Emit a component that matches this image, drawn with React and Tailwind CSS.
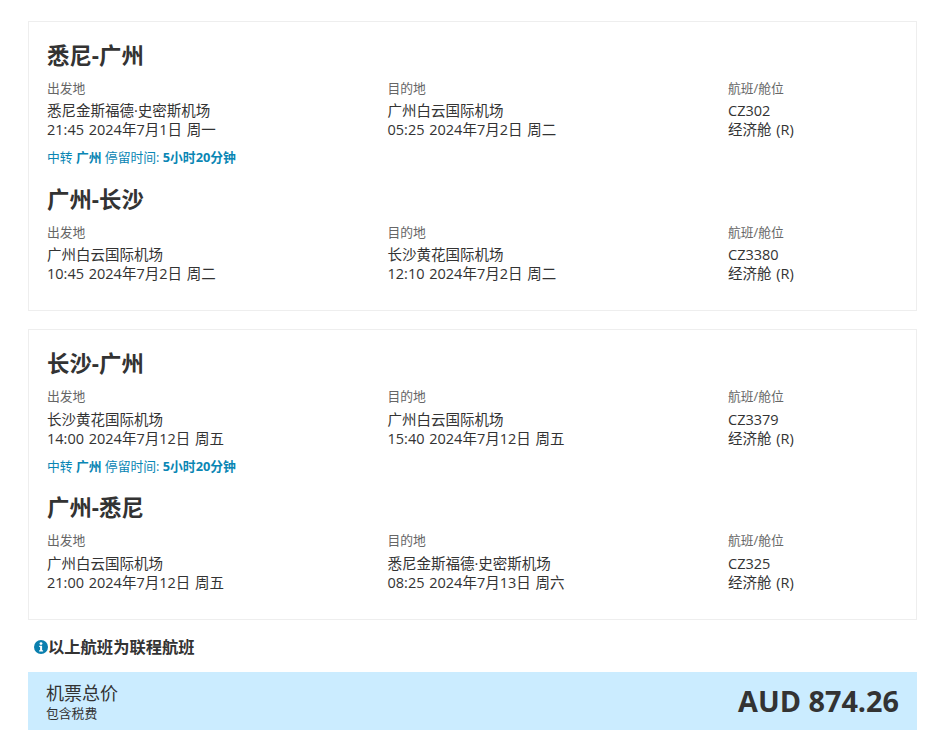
function Segment({ title, a, b, c }) {
  return (
    <div>
      <h2 className="text-[22.4px] leading-[30px] font-bold text-[#333333]">{title}</h2>
      <div className="mt-[8px] grid grid-cols-[340.5px_340.5px_1fr]">
        {[a, b, c].map((col, i) => (
          <div key={i}>
            <div className="text-[12.8px] leading-[19px] text-[#666666]">{col[0]}</div>
            <div className="mt-[3.4px] text-[14.5px] leading-[19px] text-[#333333]">{col[1]}</div>
            <div className="text-[14.5px] leading-[19px] text-[#333333] [word-spacing:1px]">{col[2]}</div>
          </div>
        ))}
      </div>
    </div>
  );
}
function Transfer() {
  return (
    <div className="mt-[9px] mb-[17.6px] text-[12.8px] leading-[19px] text-[#0a86b4]">
      中转 <span className="font-semibold">广州</span> 停留时间: <span className="font-bold">5小时20分钟</span>
    </div>
  );
}
function Card({ children, cls }) {
  return <div className={"border border-[#eeeeee] bg-white pl-[18px] pr-[18px] " + cls}>{children}</div>;
}
export default function App() {
  return (
    <div className="w-[936px] h-[737px] overflow-hidden bg-white pt-[21px] pl-[28px] pr-[19px]" style={{ fontFamily: '"Open Sans","Noto Sans CJK SC",sans-serif' }}>
      <Card cls="h-[290.2px] pt-[19px]">
        <Segment title="悉尼-广州"
          a={["出发地", "悉尼金斯福德·史密斯机场", "21:45 2024年7月1日 周一"]}
          b={["目的地", "广州白云国际机场", "05:25 2024年7月2日 周二"]}
          c={["航班/舱位", "CZ302", "经济舱 (R)"]} />
        <Transfer />
        <Segment title="广州-长沙"
          a={["出发地", "广州白云国际机场", "10:45 2024年7月2日 周二"]}
          b={["目的地", "长沙黄花国际机场", "12:10 2024年7月2日 周二"]}
          c={["航班/舱位", "CZ3380", "经济舱 (R)"]} />
      </Card>
      <Card cls="h-[290.8px] mt-[18px] pt-[19px]">
        <Segment title="长沙-广州"
          a={["出发地", "长沙黄花国际机场", "14:00 2024年7月12日 周五"]}
          b={["目的地", "广州白云国际机场", "15:40 2024年7月12日 周五"]}
          c={["航班/舱位", "CZ3379", "经济舱 (R)"]} />
        <Transfer />
        <Segment title="广州-悉尼"
          a={["出发地", "广州白云国际机场", "21:00 2024年7月12日 周五"]}
          b={["目的地", "悉尼金斯福德·史密斯机场", "08:25 2024年7月13日 周六"]}
          c={["航班/舱位", "CZ325", "经济舱 (R)"]} />
      </Card>
      <div className="mt-[16px] flex items-center pl-[5px] h-[22px] text-[16.3px] font-bold text-[#333333]">
        <svg width="15" height="16" viewBox="0 0 15 16" className="mt-[1px] shrink-0">
          <circle cx="8" cy="8" r="7" fill="#0a7fae" />
          <circle cx="8" cy="4.6" r="1.4" fill="#fff" />
          <path d="M6.2 6.8h2.9v4.4h1v1.3H6.1v-1.3h1V8.1h-.9z" fill="#fff" />
        </svg>
        <span>以上航班为联程航班</span>
      </div>
      <div className="mt-[14px] h-[58px] bg-[#cbecff] flex items-center justify-between pl-[18px] pr-[18px]">
        <div className="text-[#333333] pt-[1px]">
          <div className="text-[18px] leading-[22px]">机票总价</div>
          <div className="mt-[1px] text-[12.8px] leading-[16px]">包含税费</div>
        </div>
        <div className="text-[28.8px] font-bold text-[#333333] leading-[38px]">AUD 874.26</div>
      </div>
    </div>
  );
}
